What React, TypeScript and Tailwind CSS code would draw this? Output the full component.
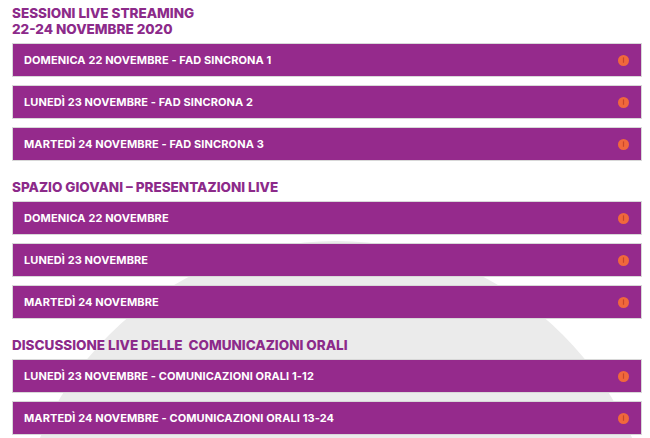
import React from "react";

type Section = {
  title: string[];
  items: string[];
};

const sections: Section[] = [
  {
    title: ["SESSIONI LIVE STREAMING", "22-24 NOVEMBRE 2020"],
    items: [
      "DOMENICA 22 NOVEMBRE - FAD SINCRONA 1",
      "LUNEDÌ 23 NOVEMBRE - FAD SINCRONA 2",
      "MARTEDÌ 24 NOVEMBRE - FAD SINCRONA 3",
    ],
  },
  {
    title: ["SPAZIO GIOVANI – PRESENTAZIONI LIVE"],
    items: ["DOMENICA 22 NOVEMBRE", "LUNEDÌ 23 NOVEMBRE", "MARTEDÌ 24 NOVEMBRE"],
  },
  {
    title: ["DISCUSSIONE LIVE DELLE\u00a0 COMUNICAZIONI ORALI"],
    items: ["LUNEDÌ 23 NOVEMBRE - COMUNICAZIONI ORALI 1-12", "MARTEDÌ 24 NOVEMBRE - COMUNICAZIONI ORALI 13-24"],
  },
];

const Dot = () => (
  <svg width="11" height="11" viewBox="0 0 11 11" className="shrink-0">
    <circle cx="5.5" cy="5.5" r="5.5" fill="#f0683c" />
    <path d="M5.5 2.8v4.4" stroke="#c9462a" strokeWidth="1.2" strokeLinecap="round" />
  </svg>
);

const Row = ({ label }: { label: string }) => (
  <div className="flex h-[34px] items-center justify-between border border-[#d8d8d8] bg-[#952a8c] pl-[11px] pr-[12px]">
    <span className="text-[11px] font-bold tracking-[0.1px] text-white">{label}</span>
    <Dot />
  </div>
);

export default function App() {
  return (
    <div className="relative h-[438px] w-[650px] overflow-hidden bg-white font-['Inter',sans-serif]">
      {/* watermark behind the list */}
      <svg className="absolute left-0 top-0" width="650" height="438" viewBox="0 0 650 438">
        <circle cx="336" cy="562" r="321" fill="#ebebeb" />
      </svg>

      <div className="relative flex flex-col gap-[18px] pl-3 pr-2 pt-[5px]">
        {sections.map((s) => (
          <div key={s.title[0]} className="flex flex-col">
            <h2 className="text-[13.5px] font-extrabold leading-[16px] text-[#8c2a8a]">
              {s.title.map((t) => (
                <div key={t} className="whitespace-pre">
                  {t}
                </div>
              ))}
            </h2>
            <div className="mt-[6px] flex flex-col gap-2">
              {s.items.map((item) => (
                <Row key={item} label={item} />
              ))}
            </div>
          </div>
        ))}
      </div>
    </div>
  );
}
